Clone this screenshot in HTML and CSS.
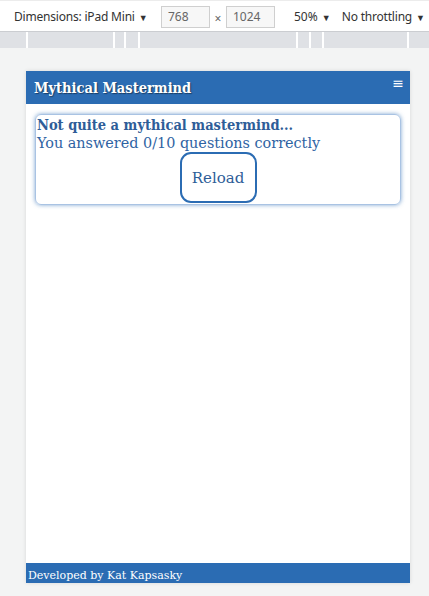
FILE: index.html
```html
<!DOCTYPE html>
<html>
<head>
<meta charset="utf-8">
<link rel="stylesheet" href="styles.css">
</head>
<body>
<div class="toolbar">
  <span class="tb-dim">Dimensions: iPad Mini <span class="caret">▼</span></span>
  <span class="tb-input">768</span>
  <span class="tb-x">×</span>
  <span class="tb-input">1024</span>
  <span class="tb-zoom">50% <span class="caret">▼</span></span>
  <span class="tb-throttle">No throttling <span class="caret">▼</span></span>
</div>
<div class="ruler">
  <div class="seg s1"></div>
  <div class="seg s2"></div>
  <div class="seg s3"></div>
  <div class="seg s4"></div>
  <div class="seg s5"></div>
  <div class="seg s6"></div>
  <div class="seg s7"></div>
  <div class="seg s8"></div>
  <div class="seg s9"></div>
</div>
<div class="stage">
  <div class="device">
    <header class="app-header">
      <span class="app-title">Mythical Mastermind</span>
      <span class="menu">≡</span>
    </header>
    <main class="app-main">
      <div class="card">
        <div class="result-title">Not quite a mythical mastermind...</div>
        <div class="result-text">You answered 0/10 questions correctly</div>
        <div class="btn-row"><button class="reload">Reload</button></div>
      </div>
    </main>
    <footer class="app-footer">Developed by Kat Kapsasky</footer>
  </div>
</div>
</body>
</html>
```

FILE: styles.css
```css
html, body {
  margin: 0;
  padding: 0;
}
body {
  width: 429px;
  height: 596px;
  background: #f3f4f4;
  overflow: hidden;
  font-family: "Noto Sans", "Liberation Sans", sans-serif;
}
.toolbar {
  box-sizing: border-box;
  height: 32px;
  background: #ffffff;
  border-top: 1px solid #ececec;
  border-bottom: 1px solid #cbcdd1;
  display: flex;
  align-items: center;
  font-size: 12px;
  color: #333;
  padding-left: 14px;
  padding-top: 1px;
  white-space: nowrap;
}
.toolbar > span {
  flex-shrink: 0;
}
.caret {
  font-size: 9px;
  margin-left: 1px;
}
.tb-dim {
  width: 147px;
  letter-spacing: -0.2px;
}
.tb-input {
  box-sizing: border-box;
  width: 49px;
  height: 22px;
  border: 1px solid #cfcfcf;
  background: #f7f7f7;
  color: #666;
  padding-left: 6px;
  line-height: 20px;
}
.tb-x {
  width: 16px;
  text-align: center;
  color: #666;
  padding-top: 3px;
}
.tb-zoom {
  margin-left: 19px;
}
.tb-throttle {
  margin-left: 11px;
  letter-spacing: -0.2px;
}
.ruler {
  height: 16px;
  display: flex;
  gap: 2px;
  background: #ffffff;
}
.seg {
  background: #dfe1e5;
}
.s1 { width: 26px; }
.s2 { width: 85px; }
.s3 { width: 9px; }
.s4 { width: 12px; }
.s5 { width: 156px; }
.s6 { width: 11px; }
.s7 { width: 11px; }
.s8 { width: 83px; }
.s9 { flex: 1; }
.stage {
  padding-top: 23px;
  padding-left: 26px;
}
.device {
  width: 384px;
  height: 512px;
  background: #ffffff;
  box-shadow: 0 0 4px rgba(0, 0, 0, 0.12);
  display: flex;
  flex-direction: column;
  font-family: "DejaVu Serif", "Liberation Serif", serif;
}
.app-header {
  height: 33px;
  background: #2b6cb3;
  display: flex;
  justify-content: space-between;
  align-items: flex-start;
  padding: 0 8px;
  color: #fff;
}
.app-title {
  font-family: "DejaVu Serif Condensed", "DejaVu Serif", serif;
  font-stretch: condensed;
  font-weight: bold;
  font-size: 14.5px;
  line-height: 33px;
  text-shadow: 1px 1px 1px #1c3f66;
}
.menu {
  font-size: 14px;
  line-height: 16px;
  margin-top: 4px;
  margin-right: -2px;
  font-family: "DejaVu Sans", sans-serif;
}
.app-main {
  flex: 1;
  padding: 10px 9px;
}
.card {
  border: 1px solid #a9c3e3;
  border-radius: 6px;
  box-shadow: 0 0 4px rgba(43, 108, 179, 0.6);
  padding: 1px 1px 0 1px;
  height: 91px;
  box-sizing: border-box;
  color: #2f63a3;
}
.result-title {
  font-family: "DejaVu Serif Condensed", "DejaVu Serif", serif;
  font-stretch: condensed;
  font-weight: bold;
  font-size: 14.5px;
  line-height: 18px;
  color: #2e5d98;
}
.result-text {
  font-size: 14.4px;
  line-height: 18px;
}
.btn-row {
  display: flex;
  justify-content: center;
}
.reload {
  width: 77px;
  height: 51px;
  border: 2px solid #2b6cb3;
  border-radius: 11px;
  background: #fff;
  color: #2e5d98;
  font-family: "DejaVu Serif", "Liberation Serif", serif;
  font-size: 15px;
  margin-top: 0;
}
.app-footer {
  height: 20px;
  background: #2b6cb3;
  color: #fff;
  font-size: 11px;
  line-height: 26px;
  padding-left: 2px;
  overflow: hidden;
}
```
